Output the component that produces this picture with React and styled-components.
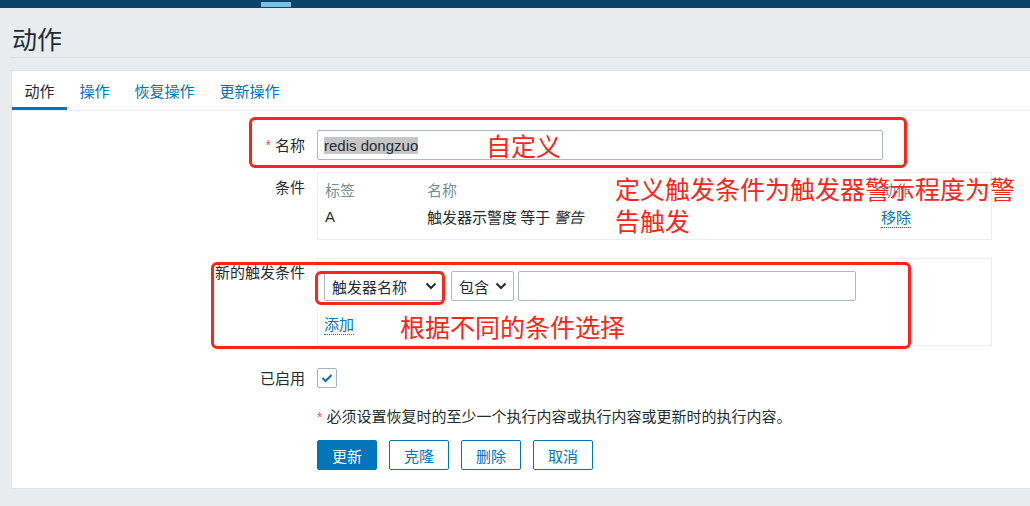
import React from "react";
import styled, { createGlobalStyle } from "styled-components";

const Global = createGlobalStyle`
  html, body { margin: 0; padding: 0; }
  body {
    background: #e8ecef;
    font-family: "Liberation Sans", "Noto Sans CJK SC", sans-serif;
    font-size: 15px;
    color: #1f2c33;
    overflow: hidden;
  }
`;

const TopBar = styled.div`
  height: 8px;
  background: #0b4468;
  display: flex;
  padding-left: 261px;
`;
const TopIndicator = styled.div`
  width: 30px;
  height: 5px;
  margin-top: 2px;
  background: #77c1ea;
`;

const Page = styled.div`
  padding-left: 11px;
`;

const TitleBar = styled.div`
  border-bottom: 1px solid #dbe0e3;
  padding: 14px 0 3px 1px;
`;
const Title = styled.h1`
  margin: 0;
  font-size: 25px;
  line-height: 32px;
  font-weight: normal;
  color: #1f2c33;
  font-family: "Noto Sans CJK SC", sans-serif;
`;

const Card = styled.div`
  margin-top: 12px;
  background: #fff;
  border: 1px solid #dfe4e7;
  border-right: none;
  padding-bottom: 18px;
`;

const Tabs = styled.div`
  display: flex;
  height: 39px;
  border-bottom: 1px solid #ebeef0;
`;
const Tab = styled.div`
  padding: 3px 12.5px 0;
  display: flex;
  align-items: center;
  color: ${(p) => (p.$active ? "#1f2c33" : "#0275b8")};
  border-bottom: 3px solid ${(p) => (p.$active ? "#0275b8" : "transparent")};
  font-family: "Noto Sans CJK SC", sans-serif;
`;

const Form = styled.div`
  padding-top: 19px;
  display: flex;
  flex-direction: column;
`;

const Row = styled.div`
  position: relative;
  display: grid;
  grid-template-columns: 293px auto;
  column-gap: 12px;
  margin-top: ${(p) => p.$mt || 0}px;
`;

const Label = styled.div`
  text-align: right;
  white-space: nowrap;
  line-height: 18px;
  padding-top: ${(p) => p.$pt || 0}px;
  font-family: "Noto Sans CJK SC", sans-serif;
  display: flex;
  justify-content: flex-end;
  align-items: ${(p) => (p.$center ? "center" : "flex-start")};
`;

const Star = styled.span`
  color: #e45959;
  margin-right: 4px;
  font-family: "Liberation Sans", sans-serif;
  font-size: 14px;
`;

const TextField = styled.div`
  box-sizing: border-box;
  width: ${(p) => p.$w}px;
  height: 30px;
  border: 1px solid #a9bac4;
  border-radius: 2px;
  padding: 0 6px;
  display: flex;
  align-items: center;
  background: #fff;
  font-family: "Liberation Sans", "Noto Sans CJK SC", sans-serif;
  font-size: 15px;
`;
const Selected = styled.span`
  background: #c6c6c6;
  line-height: 17px;
`;

const Panel = styled.div`
  box-sizing: border-box;
  width: 675px;
  border: 1px solid #ebeef0;
  padding: ${(p) => p.$pad};
`;

const CondGrid = styled.div`
  display: grid;
  grid-template-columns: 102px 454px auto;
  row-gap: 9px;
  line-height: 18px;
  font-family: "Noto Sans CJK SC", sans-serif;
`;
const HeadCell = styled.div`
  color: #768d99;
`;
const Cell = styled.div`
  color: #1f2c33;
  white-space: nowrap;
  font-family: ${(p) => (p.$latin ? '"Liberation Sans", sans-serif' : "inherit")};
`;
const Em = styled.i`
  font-style: italic;
`;

const Link = styled.span`
  color: #0275b8;
  border-bottom: 1px dotted #0275b8;
  line-height: 18px;
  font-family: "Noto Sans CJK SC", sans-serif;
`;

const FieldLine = styled.div`
  display: flex;
  align-items: center;
`;

const SelectBox = styled.div`
  box-sizing: border-box;
  width: ${(p) => p.$w}px;
  height: 30px;
  margin-right: ${(p) => p.$mr || 0}px;
  border: 1px solid #a9bac4;
  border-radius: 2px;
  padding: 0 6px 0 7px;
  display: flex;
  align-items: center;
  justify-content: space-between;
  font-family: "Noto Sans CJK SC", sans-serif;
  background: #fff;
`;

const AddLine = styled.div`
  margin-top: 14px;
`;

const Checkbox = styled.div`
  box-sizing: border-box;
  width: 20px;
  height: 20px;
  border: 1px solid #a3b5c0;
  border-radius: 2px;
  display: flex;
  align-items: center;
  justify-content: center;
`;

const Note = styled.div`
  line-height: 18px;
  font-family: "Noto Sans CJK SC", sans-serif;
`;

const Buttons = styled.div`
  display: flex;
  gap: 12px;
`;
const Button = styled.div`
  box-sizing: border-box;
  width: 60px;
  height: 30px;
  border-radius: 2px;
  border: 1px solid #0275b8;
  background: ${(p) => (p.$primary ? "#0275b8" : "#fff")};
  color: ${(p) => (p.$primary ? "#fff" : "#0275b8")};
  display: flex;
  align-items: center;
  justify-content: center;
  font-family: "Noto Sans CJK SC", sans-serif;
`;

const RedBox = styled.div`
  position: absolute;
  box-sizing: border-box;
  border: 3px solid #ff2418;
  border-radius: 6px;
  pointer-events: none;
`;
const RedText = styled.div`
  position: absolute;
  color: #ff2418;
  font-family: "Noto Sans CJK SC", sans-serif;
  font-size: 25px;
  line-height: 32px;
  white-space: ${(p) => (p.$wrap ? "normal" : "nowrap")};
`;

const Chevron = () => (
  <svg width="12" height="8" viewBox="0 0 12 8">
    <path d="M1.5 1.5 L6 6 L10.5 1.5" fill="none" stroke="#1f2c33" strokeWidth="2" />
  </svg>
);

const Check = () => (
  <svg width="12" height="10" viewBox="0 0 12 10">
    <path d="M1.5 5 L4.6 8 L10.5 2" fill="none" stroke="#0275b8" strokeWidth="2" />
  </svg>
);

export default function App() {
  return (
    <>
      <Global />
      <TopBar>
        <TopIndicator />
      </TopBar>
      <Page>
        <TitleBar>
          <Title>动作</Title>
        </TitleBar>
        <Card>
          <Tabs>
            <Tab $active>动作</Tab>
            <Tab>操作</Tab>
            <Tab>恢复操作</Tab>
            <Tab>更新操作</Tab>
          </Tabs>
          <Form>
            <Row>
              <Label $center>
                <Star>*</Star>名称
              </Label>
              <TextField $w={566}>
                <Selected>redis dongzuo</Selected>
              </TextField>
              <RedBox style={{ left: 237, top: -13, width: 658, height: 51 }} />
              <RedText style={{ left: 474, top: -1 }}>自定义</RedText>
            </Row>

            <Row $mt={12}>
              <Label $pt={6}>条件</Label>
              <Panel $pad="8px 7px 13px">
                <CondGrid>
                  <HeadCell>标签</HeadCell>
                  <HeadCell>名称</HeadCell>
                  <HeadCell>动作</HeadCell>
                  <Cell $latin>A</Cell>
                  <Cell>
                    触发器示警度 等于 <Em>警告</Em>
                  </Cell>
                  <Cell>
                    <Link>移除</Link>
                  </Cell>
                </CondGrid>
              </Panel>
              <RedText $wrap style={{ left: 603, top: 0, width: 405 }}>
                定义触发条件为触发器警示程度为警告触发
              </RedText>
            </Row>

            <Row $mt={18}>
              <Label $pt={5}>新的触发条件</Label>
              <Panel $pad="12px 6px 12px">
                <FieldLine>
                  <SelectBox $w={120} $mr={7}>
                    触发器名称 <Chevron />
                  </SelectBox>
                  <SelectBox $w={63} $mr={4}>
                    包含 <Chevron />
                  </SelectBox>
                  <TextField $w={338} />
                </FieldLine>
                <AddLine>
                  <Link>添加</Link>
                </AddLine>
              </Panel>
              <RedBox style={{ left: 199, top: 4, width: 700, height: 87 }} />
              <RedBox style={{ left: 303, top: 13, width: 130, height: 34 }} />
              <RedText style={{ left: 388, top: 52 }}>根据不同的条件选择</RedText>
            </Row>

            <Row $mt={22}>
              <Label $center>已启用</Label>
              <Checkbox>
                <Check />
              </Checkbox>
            </Row>

            <Row $mt={19}>
              <span />
              <Note>
                <Star>*</Star>必须设置恢复时的至少一个执行内容或执行内容或更新时的执行内容。
              </Note>
            </Row>

            <Row $mt={14}>
              <span />
              <Buttons>
                <Button $primary>更新</Button>
                <Button>克隆</Button>
                <Button>删除</Button>
                <Button>取消</Button>
              </Buttons>
            </Row>
          </Form>
        </Card>
      </Page>
    </>
  );
}
